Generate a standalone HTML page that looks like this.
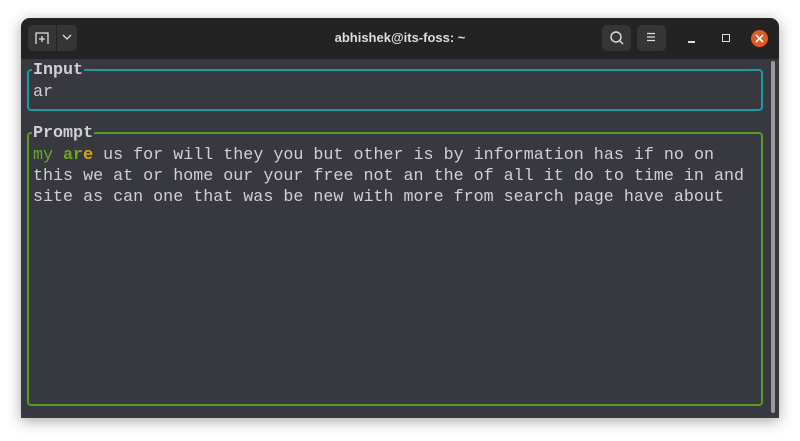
<!DOCTYPE html>
<html><head><style>
body{margin:0;width:800px;height:441px;background:#fff;position:relative;overflow:hidden;font-family:"Liberation Sans",sans-serif}
.win{position:absolute;left:21px;top:18px;width:758px;height:400px;background:#383840;border-radius:9px 9px 0 0;box-shadow:0 3px 14px rgba(0,0,0,.35);overflow:hidden}
.tb{position:absolute;left:0;top:0;width:758px;height:41px;background:#232323}
.btn{position:absolute;top:7px;height:26px;background:#353535;border-radius:5px}
.title{position:absolute;left:0;width:758px;top:12px;text-align:center;color:#ddd;font-weight:bold;font-size:13px}
.box{position:absolute;border:2px solid;border-radius:4px}
.lbl{position:absolute;background:#383840;color:#eee;font-weight:bold;padding:0 1px}
.mono{font-family:"Liberation Mono",monospace;font-size:16.7px;line-height:21px;color:#d0d0d4;white-space:pre}
</style></head><body>
<div class="win">
 <div class="tb">
  <div class="btn" style="left:7px;width:28px;border-radius:5px 0 0 5px"></div>
  <div class="btn" style="left:36px;width:20px;border-radius:0 5px 5px 0"></div>
  <svg style="position:absolute;left:14px;top:13px" width="14" height="14" fill="none" stroke="#ddd" stroke-width="1.3"><path d="M1 13V2h12v11M7 5v6M4 8h6"/></svg>
  <svg style="position:absolute;left:41px;top:15px" width="10" height="8" fill="none" stroke="#ddd" stroke-width="1.3"><path d="M1 2l4 4 4-4"/></svg>
  <div class="title">abhishek@its-foss: ~</div>
  <div class="btn" style="left:581px;width:29px"></div>
  <div class="btn" style="left:616px;width:29px"></div>
  <svg style="position:absolute;left:588px;top:12px" width="16" height="16" fill="none" stroke="#ddd" stroke-width="1.4"><circle cx="7" cy="7" r="5"/><path d="M10.5 10.5l3.5 3.5"/></svg>
  <svg style="position:absolute;left:624px;top:13px" width="12" height="12" stroke="#ddd" stroke-width="1.3"><path d="M2 2.5h8M2 6h8M2 9.5h8"/></svg>
  <div style="position:absolute;left:667px;top:23px;width:7px;height:1.5px;background:#ddd"></div>
  <div style="position:absolute;left:701px;top:16px;width:6px;height:6px;border:1.3px solid #ddd"></div>
  <div style="position:absolute;left:730px;top:12px;width:17px;height:17px;border-radius:50%;background:#e05a25"></div>
  <svg style="position:absolute;left:734px;top:16px" width="9" height="9" stroke="#fff" stroke-width="1.6"><path d="M1 1l7 7M8 1l-7 7"/></svg>
 </div>
 <div class="box" style="left:6px;top:51px;width:732px;height:38px;border-color:#1a9aa2"></div>
 <div class="lbl mono" style="left:11px;top:42px">Input</div>
 <div class="mono" style="position:absolute;left:12px;top:64px">ar</div>
 <div class="box" style="left:6px;top:114px;width:732px;height:270px;border-color:#5a9a22"></div>
 <div class="lbl mono" style="left:11px;top:105px">Prompt</div>
 <div class="mono" style="position:absolute;left:12px;top:127px"><span style="color:#6aa828">my</span> <b style="color:#6aa828">ar</b><b style="color:#d4aa10">e</b> us for will they you but other is by information has if no on
this we at or home our your free not an the of all it do to time in and
site as can one that was be new with more from search page have about</div>
 <div style="position:absolute;left:750px;top:43px;width:4px;height:352px;background:#9a9aa0;border-radius:2px"></div>
</div>
</body></html>
